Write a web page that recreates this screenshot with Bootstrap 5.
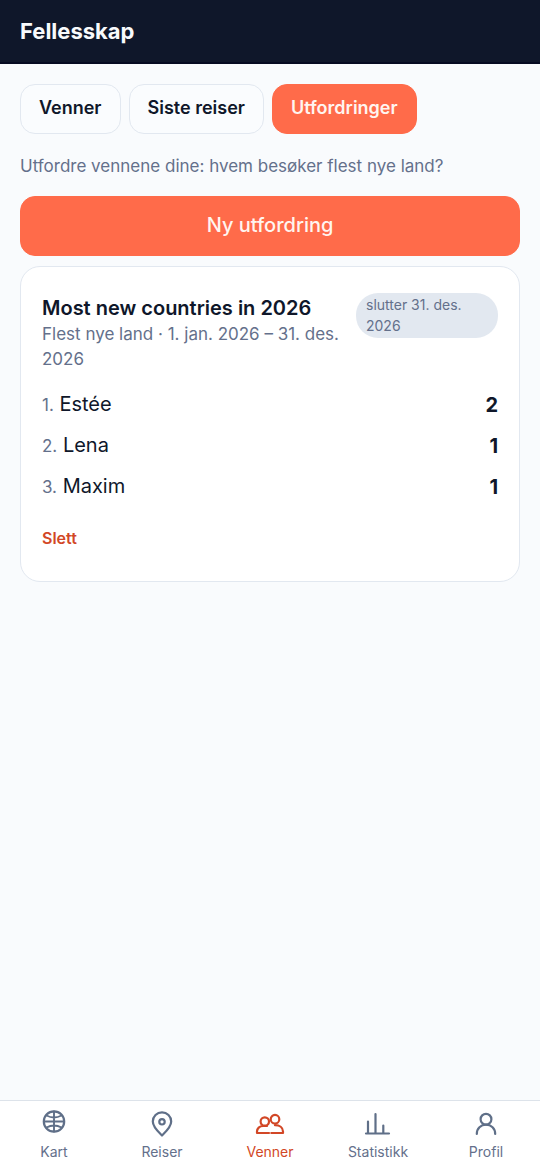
<!DOCTYPE html>
<html lang="nb">
<head>
<meta charset="utf-8">
<meta name="viewport" content="width=device-width, initial-scale=1">
<title>Fellesskap</title>
<link href="https://cdn.jsdelivr.net/npm/bootstrap@5.3.0/dist/css/bootstrap.min.css" rel="stylesheet">
<style>
  :root { --ink: #0f172a; --muted: #64708b; --line: #e2e8f0; --rust: #d24726; }
  body { font-family: Inter, "Liberation Sans", sans-serif; font-size: 19px; line-height: 26px; color: var(--ink); background: #f9fbfd; }
  .topbar { background: var(--ink); border-bottom: 2px solid #060b22; min-height: 64px; padding: 0 20px; }
  .topbar h1 { font-size: 22px; line-height: 28px; font-weight: 700; color: #f8fafc; }
  .page { padding: 20px 20px 90px; }
  .pill { --bs-btn-font-size: 18px; --bs-btn-font-weight: 600; --bs-btn-line-height: 26px; --bs-btn-border-radius: 15px;
    --bs-btn-color: #0f172a; --bs-btn-bg: #fafcfe; --bs-btn-border-color: #e2e8f0;
    --bs-btn-active-color: #fff5f0; --bs-btn-active-bg: #ff6b4a; --bs-btn-active-border-color: #ff6b4a; padding: 10px 18px 12px; }
  .intro { font-size: 17px; line-height: 24px; color: var(--muted); margin: 20px 0 18px; }
  .create { --bs-btn-font-size: 20px; --bs-btn-font-weight: 500; --bs-btn-line-height: 28px; --bs-btn-border-radius: 15px;
    --bs-btn-color: #fff5f0; --bs-btn-bg: #ff6b4a; --bs-btn-border-color: #ff6b4a; --bs-btn-hover-color: #fff; --bs-btn-hover-bg: #f05f3f; padding: 14px 18px 16px; }
  .challenge { --bs-card-border-color: #e2e8f0; --bs-card-border-radius: 20px; --bs-card-bg: #fff; color: var(--ink); margin-top: 10px; padding: 26px 21px 31px; }
  .summary { padding-top: 1px; }
  .challenge h2 { font-size: 20px; line-height: 28px; font-weight: 600; }
  .period { font-size: 17px; line-height: 25px; color: var(--muted); }
  .deadline { flex: 0 0 142px; font-size: 14px; line-height: 21px; color: var(--muted); background: var(--line); border-radius: 22px; padding: 1px 10px 2px; }
  .ranking { margin: 12px 0 19px; }
  .ranking td { padding: 6px 0; line-height: 28px; font-size: 20px; color: var(--ink); }
  .ranking .place { font-size: 17px; color: var(--muted); }
  .remove { --bs-btn-font-size: 16px; --bs-btn-font-weight: 600; --bs-btn-line-height: 24px; --bs-btn-color: #d24726; --bs-btn-hover-color: #a83216; --bs-btn-padding-x: 0; --bs-btn-padding-y: 0; --bs-btn-border-width: 0; }
  .tabs { background: #fff; border-top: 1px solid #dde3ea; min-height: 70px; }
  .tabs a { color: var(--muted); font-size: 14px; line-height: 20px; text-decoration: none; padding-top: 8px; }
  .tabs a.active { color: var(--rust); }
  .tabs svg { width: 30px; height: 30px; margin-bottom: 3px; fill: none; stroke: #5f6f88; stroke-width: 2.200; stroke-linecap: round; stroke-linejoin: round; }
  .tabs .active svg { stroke: var(--rust); }
</style>
</head>
<body>
<header class="topbar d-flex align-items-center"><h1 class="m-0">Fellesskap</h1></header>

<main class="page">
  <div class="d-flex flex-wrap gap-2">
    <button type="button" class="btn pill">Venner</button>
    <button type="button" class="btn pill">Siste reiser</button>
    <button type="button" class="btn pill active" aria-pressed="true">Utfordringer</button>
  </div>
  <p class="intro">Utfordre vennene dine: hvem besøker flest nye land?</p>
  <button type="button" class="btn create w-100">Ny utfordring</button>

  <article class="card challenge">
    <div class="d-flex align-items-start gap-3">
      <div class="summary flex-grow-1">
        <h2 class="m-0">Most new countries in 2026</h2>
        <p class="period m-0">Flest nye land · 1. jan. 2026 – 31. des. 2026</p>
      </div>
      <span class="deadline">slutter 31. des. 2026</span>
    </div>
    <table class="ranking w-100">
      <tbody>
        <tr><td><span class="place">1.</span> Estée</td><td class="text-end fw-bold">2</td></tr>
        <tr><td><span class="place">2.</span> Lena</td><td class="text-end fw-bold">1</td></tr>
        <tr><td><span class="place">3.</span> Maxim</td><td class="text-end fw-bold">1</td></tr>
      </tbody>
    </table>
    <div class="d-flex"><button type="button" class="btn remove">Slett</button></div>
  </article>
</main>

<nav class="tabs fixed-bottom row g-0 row-cols-5 text-center" aria-label="Hovedmeny">
  <a href="#kart" class="col d-flex flex-column align-items-center">
    <svg viewBox="0 0 30 30" aria-hidden="true"><circle cx="15" cy="12.500" r="10.200"/><path d="M15 2.500v20M5 12.500h20M7.500 6.500Q15 10.500 22.500 6.500M7.500 18.500Q15 14.500 22.500 18.500" stroke-width="1.900"/></svg>
    Kart</a>
  <a href="#reiser" class="col d-flex flex-column align-items-center">
    <svg viewBox="0 0 30 30" aria-hidden="true"><path d="M15 26.500C11 22.500 5.800 18 5.800 12.500a9.200 9.200 0 0 1 18.400 0C24.200 18 19 22.500 15 26.500Z"/><circle cx="15" cy="12.800" r="2.700"/></svg>
    Reiser</a>
  <a href="#venner" class="col d-flex flex-column align-items-center active" aria-current="page">
    <svg viewBox="0 0 30 30" aria-hidden="true"><circle cx="9.800" cy="12.500" r="4.200"/><circle cx="20" cy="10.200" r="4.300"/><path d="M14 24H2v-1.500C2 19.500 4.500 17 8 17h4M16.300 24H28v-1.500c0-4-3.500-6.300-8-6.300"/></svg>
    Venner</a>
  <a href="#statistikk" class="col d-flex flex-column align-items-center">
    <svg viewBox="0 0 30 30" aria-hidden="true"><path d="M3 24.500h23M5 24V12.500M12.500 24V5M20.300 24v-7.500"/></svg>
    Statistikk</a>
  <a href="#profil" class="col d-flex flex-column align-items-center">
    <svg viewBox="0 0 30 30" aria-hidden="true"><circle cx="15" cy="10.200" r="5.400"/><path d="M5.800 25c0-5.500 4-9.300 9.200-9.300s9.200 3.800 9.200 9.300"/></svg>
    Profil</a>
</nav>
<script src="https://cdn.jsdelivr.net/npm/bootstrap@5.3.0/dist/js/bootstrap.bundle.min.js"></script>
</body>
</html>
